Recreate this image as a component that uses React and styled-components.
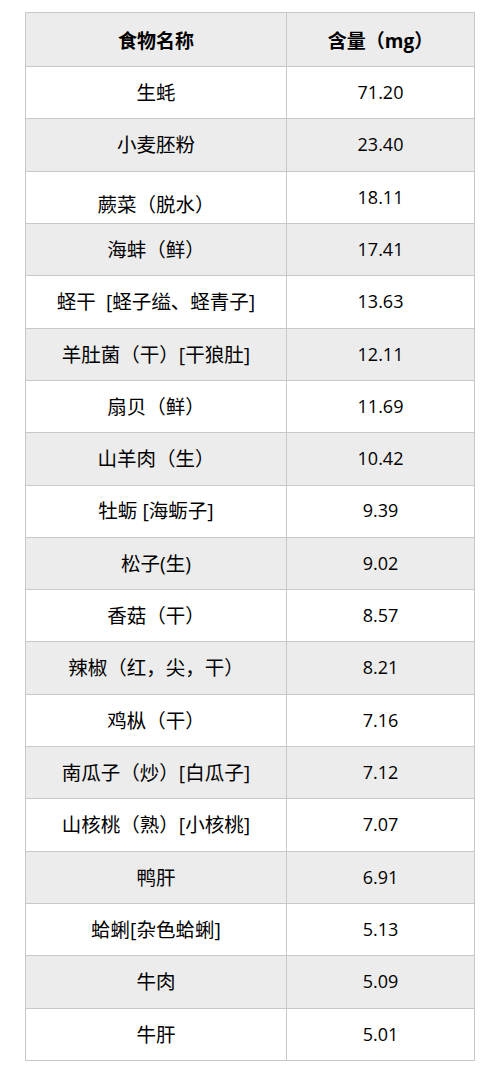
import React from 'react';
import styled, { createGlobalStyle } from 'styled-components';

const GlobalStyle = createGlobalStyle`
  html, body {
    margin: 0;
    padding: 0;
    background: #ffffff;
  }
  body {
    font-family: "Open Sans", "Noto Sans CJK SC", sans-serif;
    color: #000000;
  }
`

const Page = styled.div`
  padding: 12px 0 0 25px;
`

const Table = styled.table`
  width: 450px;
  border-collapse: collapse;
  table-layout: fixed;
`

const HeadCell = styled.th`
  height: 53px;
  padding: 0;
  background: #ececec;
  border: 1px solid #c8c8c8;
  font-size: 19px;
  font-weight: 700;
  text-align: center;
  width: ${props => props.$width};
`

const Row = styled.tr`
  background: ${props => (props.$shaded ? '#ececec' : '#ffffff')};
`

const Cell = styled.td`
  height: ${props => (props.$drop ? '37.32px' : '51.32px')};
  padding: ${props => (props.$drop ? '14px 0 0' : '0')};
  border: 1px solid #c8c8c8;
  text-align: center;
  vertical-align: middle;
  white-space: pre;
  font-size: ${props => (props.$name ? '19.5px' : '18px')};
  font-weight: 400;
  line-height: 1.3;
`

const foods = [
  { name: '生蚝', value: '71.20' },
  { name: '小麦胚粉', value: '23.40' },
  { name: '蕨菜（脱水）', value: '18.11', drop: true },
  { name: '海蚌（鲜）', value: '17.41' },
  { name: '蛏干  [蛏子缢、蛏青子]', value: '13.63' },
  { name: '羊肚菌（干）[干狼肚]', value: '12.11' },
  { name: '扇贝（鲜）', value: '11.69' },
  { name: '山羊肉（生）', value: '10.42' },
  { name: '牡蛎 [海蛎子]', value: '9.39' },
  { name: '松子(生)', value: '9.02' },
  { name: '香菇（干）', value: '8.57' },
  { name: '辣椒（红，尖，干）', value: '8.21' },
  { name: '鸡枞（干）', value: '7.16' },
  { name: '南瓜子（炒）[白瓜子]', value: '7.12' },
  { name: '山核桃（熟）[小核桃]', value: '7.07' },
  { name: '鸭肝', value: '6.91' },
  { name: '蛤蜊[杂色蛤蜊]', value: '5.13' },
  { name: '牛肉', value: '5.09' },
  { name: '牛肝', value: '5.01' },
]

function App() {
  return (
    <>
      <GlobalStyle />
      <Page>
        <Table>
          <thead>
            <tr>
              <HeadCell $width="260px">食物名称</HeadCell>
              <HeadCell>含量（mg）</HeadCell>
            </tr>
          </thead>
          <tbody>
            {foods.map((food, i) => (
              <Row key={food.name} $shaded={i % 2 === 1}>
                <Cell $name $drop={food.drop}>{food.name}</Cell>
                <Cell>{food.value}</Cell>
              </Row>
            ))}
          </tbody>
        </Table>
      </Page>
    </>
  )
}

export default App;
